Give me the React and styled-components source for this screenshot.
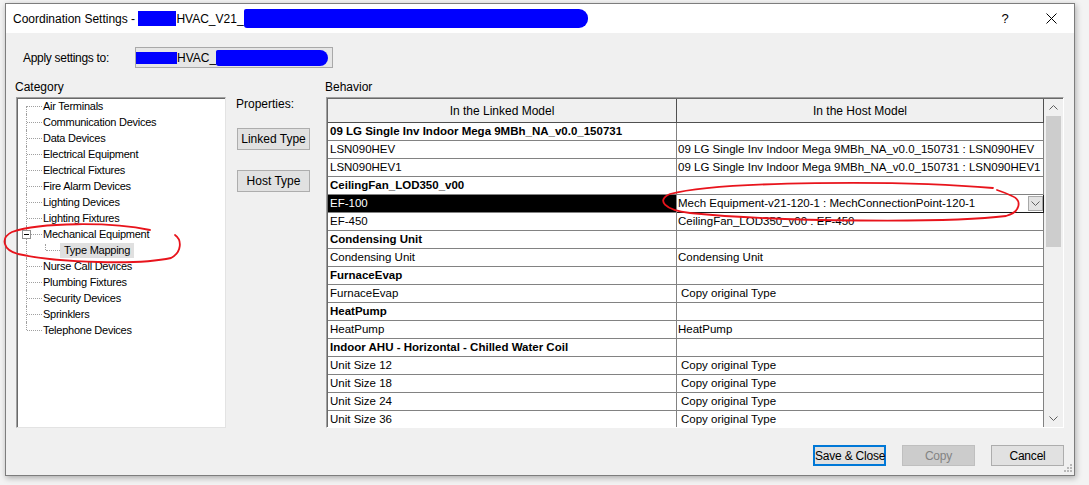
import React from 'react'
import styled, { createGlobalStyle } from 'styled-components'

const GlobalStyle = createGlobalStyle`
  html, body { margin: 0; padding: 0; }
  body {
    width: 1089px;
    height: 485px;
    overflow: hidden;
    background: #f3f3f3;
    font-family: "Liberation Sans", Arial, sans-serif;
    color: #000;
  }
`

const treeItems = [
  'Air Terminals',
  'Communication Devices',
  'Data Devices',
  'Electrical Equipment',
  'Electrical Fixtures',
  'Fire Alarm Devices',
  'Lighting Devices',
  'Lighting Fixtures',
  { label: 'Mechanical Equipment', child: 'Type Mapping' },
  'Nurse Call Devices',
  'Plumbing Fixtures',
  'Security Devices',
  'Sprinklers',
  'Telephone Devices',
]

// kind: g = family heading, r = plain row, s = selected row
const rows = [
  ['g', '09 LG Single Inv Indoor Mega 9MBh_NA_v0.0_150731', ''],
  ['r', 'LSN090HEV', '09 LG Single Inv Indoor Mega 9MBh_NA_v0.0_150731 : LSN090HEV'],
  ['r', 'LSN090HEV1', '09 LG Single Inv Indoor Mega 9MBh_NA_v0.0_150731 : LSN090HEV1'],
  ['g', 'CeilingFan_LOD350_v00', ''],
  ['s', 'EF-100', 'Mech Equipment-v21-120-1 : MechConnectionPoint-120-1'],
  ['r', 'EF-450', 'CeilingFan_LOD350_v00 : EF-450'],
  ['g', 'Condensing Unit', ''],
  ['r', 'Condensing Unit', 'Condensing Unit'],
  ['g', 'FurnaceEvap', ''],
  ['r', 'FurnaceEvap', 'Copy original Type'],
  ['g', 'HeatPump', ''],
  ['r', 'HeatPump', 'HeatPump'],
  ['g', 'Indoor AHU - Horizontal - Chilled Water Coil', ''],
  ['r', 'Unit Size 12', 'Copy original Type'],
  ['r', 'Unit Size 18', 'Copy original Type'],
  ['r', 'Unit Size 24', 'Copy original Type'],
  ['r', 'Unit Size 36', 'Copy original Type'],
]

function App() {
  return (
    <Page>
      <GlobalStyle />
      <Dialog>
        <TitleBar>
          <TitleText>Coordination Settings - </TitleText>
          <Redact $w={38} $h={15} />
          <TitleText>HVAC_V21_</TitleText>
          <Redact $w={344} $h={19} $round />
          <CaptionButtons>
            <CaptionButton>?</CaptionButton>
            <CaptionButton>
              <svg width="11" height="11" viewBox="0 0 11 11">
                <path d="M0.5 0.5 L10.5 10.5 M10.5 0.5 L0.5 10.5" stroke="#000" strokeWidth="1" fill="none" />
              </svg>
            </CaptionButton>
          </CaptionButtons>
        </TitleBar>

        <Body>
          <ApplyRow>
            <ApplyLabel>Apply settings to:</ApplyLabel>
            <ApplyCombo>
              <Redact $w={41} $h={12} />
              <span>HVAC_</span>
              <Redact $w={112} $h={16} $round />
            </ApplyCombo>
          </ApplyRow>

          <MainGrid>
            <GroupLabel $area="catlabel">Category</GroupLabel>
            <GroupLabel $area="behlabel">Behavior</GroupLabel>

            <TreeBox>
              {treeItems.map((item, i) => {
                const first = i === 0
                const last = i === treeItems.length - 1
                if (typeof item === 'string') {
                  return (
                    <TreeRow key={item}>
                      <Connector $first={first} $last={last} />
                      <TreeLabel>{item}</TreeLabel>
                    </TreeRow>
                  )
                }
                return (
                  <React.Fragment key={item.label}>
                    <TreeRow>
                      <Connector $first={first} $last={last}>
                        <Expander />
                      </Connector>
                      <TreeLabel>{item.label}</TreeLabel>
                    </TreeRow>
                    <TreeRow>
                      <Connector $through />
                      <ChildConnector />
                      <TreeLabel $selected>{item.child}</TreeLabel>
                    </TreeRow>
                  </React.Fragment>
                )
              })}
            </TreeBox>

            <PropsCol>
              <PropsLabel>Properties:</PropsLabel>
              <SideButton $gap={17}>Linked Type</SideButton>
              <SideButton $gap={20}>Host Type</SideButton>
            </PropsCol>

            <TableBox>
              <TableInner>
                <MapGrid>
                  <HeadCell>In the Linked Model</HeadCell>
                  <HeadCell>In the Host Model</HeadCell>
                  {rows.map(([kind, linked, host], i) => (
                    <React.Fragment key={i}>
                      <Cell $bold={kind === 'g'} $selected={kind === 's'}>{linked}</Cell>
                      {kind === 's' ? (
                        <ComboCell>
                          <ComboText>{host}</ComboText>
                          <DropButton>
                            <Chevron down />
                          </DropButton>
                        </ComboCell>
                      ) : (
                        <Cell $host $lead={host === 'Copy original Type'}>{host}</Cell>
                      )}
                    </React.Fragment>
                  ))}
                </MapGrid>
                <ScrollBar>
                  <ScrollArrow><Chevron /></ScrollArrow>
                  <Thumb />
                  <Track />
                  <ScrollArrow><Chevron down /></ScrollArrow>
                </ScrollBar>
              </TableInner>
            </TableBox>
          </MainGrid>

          <ButtonRow>
            <DialogButton $default>Save &amp; Close</DialogButton>
            <DialogButton disabled>Copy</DialogButton>
            <DialogButton>Cancel</DialogButton>
          </ButtonRow>
        </Body>

        <Grip>
          <svg width="8" height="8" viewBox="0 0 8 8">
            <g fill="#b8b8b8">
              <rect x="6" y="0" width="2" height="2" />
              <rect x="3" y="3" width="2" height="2" />
              <rect x="6" y="3" width="2" height="2" />
              <rect x="0" y="6" width="2" height="2" />
              <rect x="3" y="6" width="2" height="2" />
              <rect x="6" y="6" width="2" height="2" />
            </g>
          </svg>
        </Grip>
      </Dialog>

      <Annotation width="1089" height="485" viewBox="0 0 1089 485">
        <path
          d="M150 230 C 112 222, 40 222, 12 232 C 0 238, 3 250, 18 254 C 60 263, 140 265, 171 258 C 182 252, 182 240, 175 235"
          stroke="#e8141c" strokeWidth="1.8" fill="none" strokeLinecap="round"
        />
        <path
          d="M993 188 C 900 180, 720 181, 670 194 C 656 200, 664 210, 690 213 C 780 222, 950 223, 1006 216 C 1021 212, 1022 200, 1012 196 C 1006 193, 1000 191, 997 190"
          stroke="#e8141c" strokeWidth="1.8" fill="none" strokeLinecap="round"
        />
      </Annotation>
    </Page>
  )
}

function Chevron({ down }) {
  return (
    <svg width="9" height="5" viewBox="0 0 9 5">
      <path
        d={down ? 'M0.5 0.5 L4.5 4.5 L8.5 0.5' : 'M0.5 4.5 L4.5 0.5 L8.5 4.5'}
        stroke="#606060" strokeWidth="1" fill="none"
      />
    </svg>
  )
}

export default App

const Page = styled.div`
  position: relative;
  width: 1089px;
  height: 485px;
  padding: 3px 0 0 5px;
  box-sizing: border-box;
`

const Dialog = styled.div`
  position: relative;
  width: 1070px;
  height: 473px;
  box-sizing: border-box;
  border: 1px solid #7d7d7d;
  background: #f0f0f0;
  box-shadow: 1px 2px 6px rgba(0, 0, 0, 0.3);
  display: flex;
  flex-direction: column;
`

const TitleBar = styled.div`
  height: 29px;
  flex: none;
  background: #fff;
  display: flex;
  align-items: center;
  padding-left: 7px;
  font-size: 12px;
`

const TitleText = styled.span`
  white-space: pre;
`

const Redact = styled.span`
  display: inline-block;
  flex: none;
  background: #0000ff;
  width: ${p => p.$w}px;
  height: ${p => p.$h}px;
  border-radius: ${p => (p.$round ? '2px 9px 9px 3px' : '0')};
`

const CaptionButtons = styled.div`
  margin-left: auto;
  display: flex;
`

const CaptionButton = styled.div`
  width: 46px;
  height: 29px;
  display: flex;
  align-items: center;
  justify-content: center;
  font-size: 13px;
`

const Body = styled.div`
  flex: 1;
  display: flex;
  flex-direction: column;
  padding: 0 10px 0 10px;
`

const ApplyRow = styled.div`
  margin-top: 14px;
  height: 21px;
  display: flex;
  align-items: center;
`

const ApplyLabel = styled.div`
  width: 119px;
  padding-left: 7px;
  box-sizing: border-box;
  font-size: 12px;
  letter-spacing: -0.3px;
`

const ApplyCombo = styled.div`
  width: 198px;
  height: 21px;
  box-sizing: border-box;
  border: 1px solid #a9a9a9;
  background: #e6e6e6;
  display: flex;
  align-items: center;
  font-size: 12px;
  overflow: hidden;
`

const MainGrid = styled.div`
  margin-top: 12px;
  display: grid;
  grid-template-columns: 210px 80px 738px;
  grid-template-rows: 17px 331px;
  column-gap: 10px;
  grid-template-areas:
    "catlabel . behlabel"
    "tree props table";
`

const GroupLabel = styled.div`
  grid-area: ${p => p.$area};
  font-size: 12px;
  line-height: 14px;
  margin-left: -1px;
`

const TreeBox = styled.div`
  grid-area: tree;
  box-sizing: border-box;
  background: #fff;
  border: 1px solid;
  border-color: #a0a0a0 #e3e3e3 #e3e3e3 #a0a0a0;
  box-shadow: inset 1px 1px 0 #696969;
  padding-left: 9px;
  font-size: 11px;
  letter-spacing: -0.25px;
  overflow: hidden;
`

const TreeRow = styled.div`
  display: flex;
  align-items: center;
  height: 16px;
`

const Connector = styled.div`
  position: relative;
  flex: none;
  width: 17px;
  align-self: stretch;

  &::before {
    content: '';
    position: absolute;
    left: 0;
    top: ${p => (p.$first ? '50%' : '0')};
    bottom: ${p => (p.$last ? '50%' : '0')};
    border-left: 1px dotted #a0a0a0;
  }

  &::after {
    content: '';
    display: ${p => (p.$through ? 'none' : 'block')};
    position: absolute;
    left: 1px;
    top: 50%;
    width: 15px;
    border-top: 1px dotted #a0a0a0;
  }
`

const ChildConnector = styled.div`
  position: relative;
  flex: none;
  width: 15px;
  margin-left: 2px;
  align-self: stretch;

  &::before {
    content: '';
    position: absolute;
    left: 0;
    top: 2px;
    bottom: 50%;
    border-left: 1px dotted #a0a0a0;
  }

  &::after {
    content: '';
    position: absolute;
    left: 1px;
    top: 50%;
    width: 14px;
    border-top: 1px dotted #a0a0a0;
  }
`

const Expander = styled.span`
  position: absolute;
  z-index: 1;
  left: -4px;
  top: 4px;
  width: 9px;
  height: 9px;
  box-sizing: border-box;
  border: 1px solid #919191;
  background: #fff;

  &::after {
    content: '';
    position: absolute;
    left: 1px;
    top: 3px;
    width: 5px;
    border-top: 1px solid #000;
  }
`

const TreeLabel = styled.span`
  white-space: nowrap;
  line-height: 15px;
  padding: ${p => (p.$selected ? '0 4px' : '0')};
  background: ${p => (p.$selected ? '#e0e0e0' : 'transparent')};
`

const PropsCol = styled.div`
  grid-area: props;
  display: flex;
  flex-direction: column;
  align-items: flex-start;
`

const PropsLabel = styled.div`
  font-size: 12px;
  line-height: 14px;
`

const SideButton = styled.button`
  width: 73px;
  height: 22px;
  margin: ${p => p.$gap}px 0 0 1px;
  padding: 0;
  box-sizing: border-box;
  border: 1px solid #adadad;
  background: #e1e1e1;
  font-family: inherit;
  font-size: 12px;
  color: #000;
  white-space: nowrap;
`

const TableBox = styled.div`
  grid-area: table;
  box-sizing: border-box;
  border: 1px solid;
  border-color: #a0a0a0 #fff #fff #a0a0a0;
  display: flex;
  overflow: hidden;
  background: #fff;
`

const TableInner = styled.div`
  flex: 1;
  display: flex;
  border-left: 1px solid #696969;
  border-top: 1px solid #696969;
  overflow: hidden;
`

const MapGrid = styled.div`
  flex: none;
  width: 716px;
  display: grid;
  grid-template-columns: 349px 367px;
  grid-template-rows: 24px;
  grid-auto-rows: 18px;
  align-content: start;
  font-size: 11.5px;
`

const HeadCell = styled.div`
  box-sizing: border-box;
  background: #f0f0f0;
  border-right: 1px solid #505050;
  border-bottom: 1px solid #505050;
  display: flex;
  align-items: center;
  justify-content: center;
  font-size: 12px;
`

const Cell = styled.div`
  box-sizing: border-box;
  border-right: 1px solid #828282;
  border-bottom: 1px solid #828282;
  padding-left: ${p => (p.$host ? (p.$lead ? '4px' : '1px') : '2px')};
  line-height: 17px;
  white-space: nowrap;
  overflow: hidden;
  font-weight: ${p => (p.$bold ? 700 : 400)};
  background: ${p => (p.$selected ? '#000' : '#fff')};
  color: ${p => (p.$selected ? '#fff' : '#000')};
`

const ComboCell = styled.div`
  box-sizing: border-box;
  display: flex;
  align-items: stretch;
  border-right: 1px solid #1a1a1a;
  border-bottom: 1px solid #1a1a1a;
  background: #fff;
`

const ComboText = styled.div`
  flex: 1;
  padding-left: 1px;
  line-height: 17px;
  white-space: nowrap;
`

const DropButton = styled.div`
  width: 15px;
  margin: 1px 0 1px;
  box-sizing: border-box;
  border: 1px solid #a8a8a8;
  background: #e3e3e3;
  display: flex;
  align-items: center;
  justify-content: center;
`

const ScrollBar = styled.div`
  flex: 1;
  background: #f0f0f0;
  display: flex;
  flex-direction: column;
  align-items: center;
`

const ScrollArrow = styled.div`
  height: 17px;
  flex: none;
  display: flex;
  align-items: center;
  justify-content: center;
`

const Thumb = styled.div`
  width: 15px;
  height: 131px;
  flex: none;
  background: #cdcdcd;
`

const Track = styled.div`
  flex: 1;
`

const ButtonRow = styled.div`
  margin-top: 17px;
  display: flex;
  justify-content: flex-end;
  gap: 16px;
`

const DialogButton = styled.button`
  width: 73px;
  height: 21px;
  padding: 0;
  box-sizing: border-box;
  font-family: inherit;
  font-size: 12px;
  letter-spacing: -0.2px;
  white-space: nowrap;
  color: #000;
  background: #e1e1e1;
  border: ${p => (p.$default ? '2px solid #0078d7' : '1px solid #adadad')};

  &:disabled {
    background: #cccccc;
    border-color: #bfbfbf;
    color: #838383;
  }
`

const Grip = styled.div`
  position: absolute;
  right: 2px;
  bottom: 3px;
  line-height: 0;
`

const Annotation = styled.svg`
  position: absolute;
  left: 0;
  top: 0;
  pointer-events: none;
`
